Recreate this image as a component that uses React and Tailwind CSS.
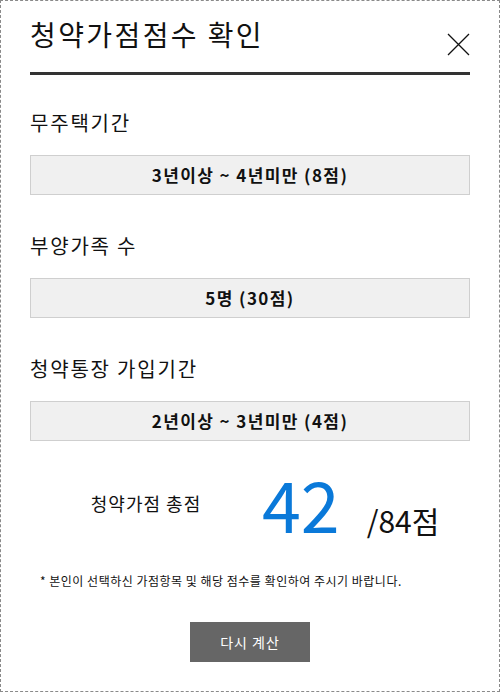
import React from "react";

const font = { fontFamily: '"Noto Sans CJK KR", "Noto Sans", sans-serif' };

function Section({ label, value, first }) {
  return (
    <div className={first ? "mt-[33px]" : "mt-[36px]"}>
      <div className="text-[20px] leading-[30px] tracking-[1.8px] text-[#111]">{label}</div>
      <div className="mt-[17px] h-[40px] border border-[#cfcfcf] bg-[#f0f0f0] flex items-center justify-center text-[17px] tracking-[1.4px] font-bold text-[#111]">
        {value}
      </div>
    </div>
  );
}

export default function App() {
  return (
    <div
      className="w-[500px] h-[692px] border border-dashed border-[#8a8a8a] px-[29px] bg-white flex flex-col"
      style={font}
    >
      <div className="h-[74px] border-b-[3px] border-[#333] flex justify-between items-start pt-[13px]">
        <h1 className="text-[28px] leading-[40px] tracking-[2.4px] font-normal text-[#111]">청약가점점수 확인</h1>
        <svg className="mt-[19px]" width="23" height="23" viewBox="0 0 23 23" fill="none">
          <path d="M1 1 L22 22 M22 1 L1 22" stroke="#111" strokeWidth="1.3" />
        </svg>
      </div>

      <Section first label="무주택기간" value="3년이상 ~ 4년미만 (8점)" />
      <Section label="부양가족 수" value="5명 (30점)" />
      <Section label="청약통장 가입기간" value="2년이상 ~ 3년미만 (4점)" />

      <div className="mt-[22px] h-[80px] flex items-center">
        <div className="w-[232px] text-center text-[18px] tracking-[1px] text-[#111]">청약가점 총점</div>
        <div className="flex items-baseline">
          <span className="text-[70px] leading-none text-[#0a79d9]">42</span>
          <span className="ml-[27px] text-[30px] leading-none text-[#111]">/84점</span>
        </div>
      </div>

      <p className="mt-[29px] pl-[10px] text-[12px] leading-[18px] tracking-[0.5px] text-[#111]">
        * 본인이 선택하신 가점항목 및 해당 점수를 확인하여 주시기 바랍니다.
      </p>

      <button className="mt-[32px] mx-auto w-[120px] h-[40px] bg-[#666] text-white text-[14px] tracking-[1px]">
        다시 계산
      </button>
    </div>
  );
}
